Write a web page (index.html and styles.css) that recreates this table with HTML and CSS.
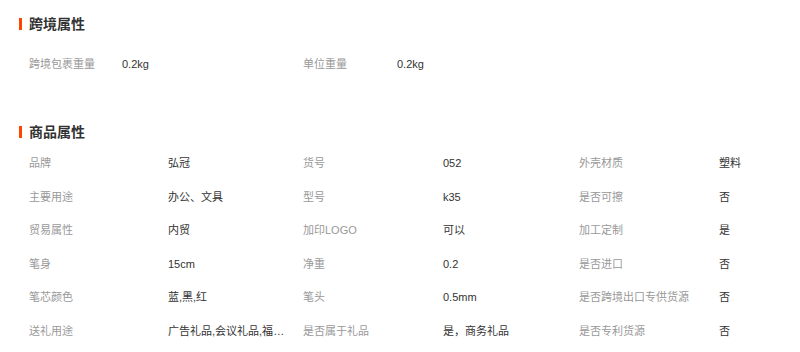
FILE: index.html
```html
<!DOCTYPE html>
<html lang="zh-CN">
<head>
<meta charset="utf-8">
<title>属性</title>
<link rel="stylesheet" href="styles.css">
</head>
<body>
<div class="page">
  <section class="section sec-cross">
    <h2 class="title"><span class="bar"></span>跨境属性</h2>
    <div class="grid grid-cross">
      <div class="lbl">跨境包裹重量</div><div class="val">0.2kg</div>
      <div class="lbl">单位重量</div><div class="val">0.2kg</div>
    </div>
  </section>
  <section class="section sec-goods">
    <h2 class="title"><span class="bar"></span>商品属性</h2>
    <div class="grid grid-goods">
      <div class="lbl">品牌</div><div class="val">弘冠</div>
      <div class="lbl">货号</div><div class="val">052</div>
      <div class="lbl">外壳材质</div><div class="val">塑料</div>

      <div class="lbl">主要用途</div><div class="val">办公、文具</div>
      <div class="lbl">型号</div><div class="val">k35</div>
      <div class="lbl">是否可擦</div><div class="val">否</div>

      <div class="lbl">贸易属性</div><div class="val">内贸</div>
      <div class="lbl">加印LOGO</div><div class="val">可以</div>
      <div class="lbl">加工定制</div><div class="val">是</div>

      <div class="lbl">笔身</div><div class="val">15cm</div>
      <div class="lbl">净重</div><div class="val">0.2</div>
      <div class="lbl">是否进口</div><div class="val">否</div>

      <div class="lbl">笔芯颜色</div><div class="val">蓝,黑,红</div>
      <div class="lbl">笔头</div><div class="val">0.5mm</div>
      <div class="lbl">是否跨境出口专供货源</div><div class="val">否</div>

      <div class="lbl">送礼用途</div><div class="val clip">广告礼品,会议礼品,福利礼品</div>
      <div class="lbl">是否属于礼品</div><div class="val">是，商务礼品</div>
      <div class="lbl">是否专利货源</div><div class="val">否</div>
    </div>
  </section>
</div>
</body>
</html>
```
FILE: styles.css
```css
html, body {
  margin: 0;
  padding: 0;
  background: #fff;
}
body {
  font-family: "Liberation Sans", "Noto Sans CJK SC", sans-serif;
  font-size: 11px;
  color: #333;
  width: 800px;
  height: 352px;
  overflow: hidden;
}
.page {
  padding: 14px 0 0 19px;
}
.title {
  display: flex;
  align-items: center;
  height: 20px;
  margin: 0;
  font-size: 14px;
  font-weight: bold;
  color: #333;
  line-height: 20px;
}
.bar {
  width: 3px;
  height: 12px;
  background: #ff4400;
  margin-right: 7px;
}
.grid {
  display: grid;
  padding-left: 10px;
}
.grid > div {
  height: 33.5px;
  line-height: 33.5px;
  white-space: nowrap;
}
.lbl {
  color: #999;
}
.val {
  color: #333;
}
.grid-cross {
  margin-top: 13px;
  grid-template-columns: 93px 181px 94px auto;
}
.grid-cross > div {
  height: 34px;
  line-height: 34px;
}
.sec-goods {
  margin-top: 40.5px;
}
.grid-goods {
  margin-top: 5.5px;
  grid-template-columns: 139px 135px 140px 136px 140px auto;
}
.clip {
  width: 118px;
  overflow: hidden;
  text-overflow: ellipsis;
}
```
